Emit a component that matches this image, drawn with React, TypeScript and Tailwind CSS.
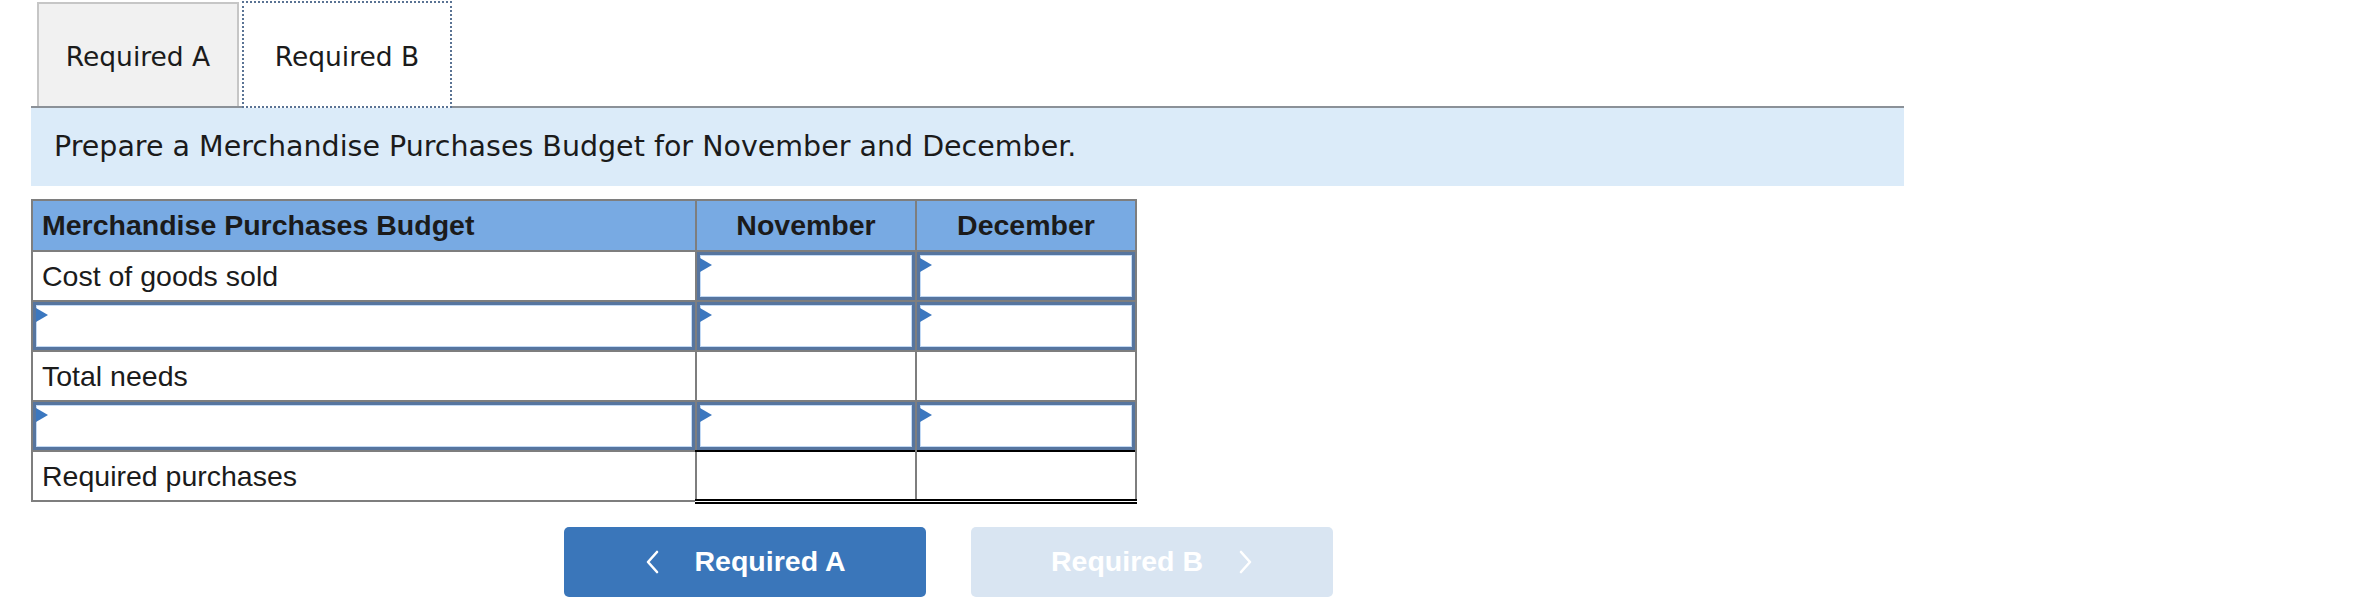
import React from "react";

// Small blue marker shown at the top-left of each dropdown/input cell
const Marker = () => (
  <svg
    className="absolute left-0 top-[3px]"
    width="12"
    height="14"
    viewBox="0 0 12 14"
  >
    <polygon points="0,0 12,7 0,14" fill="#3b77bf" />
  </svg>
);

const InputCell = () => (
  <div className="relative h-full w-full border-[3px] border-[#56759f] bg-white shadow-[inset_0_0_0_1px_#c3daf5]">
    <Marker />
  </div>
);

const ChevronLeft = () => (
  <svg width="14" height="24" viewBox="0 0 14 24" fill="none">
    <polyline
      points="12,2 3,12 12,22"
      stroke="white"
      strokeWidth="2.6"
      strokeLinecap="round"
      strokeLinejoin="round"
    />
  </svg>
);

const ChevronRight = () => (
  <svg width="14" height="24" viewBox="0 0 14 24" fill="none">
    <polyline
      points="2,2 11,12 2,22"
      stroke="white"
      strokeWidth="2.6"
      strokeLinecap="round"
      strokeLinejoin="round"
    />
  </svg>
);

export default function App() {
  const cell = "border-2 border-[#7e7e7e] p-0 h-[50px]";
  const label =
    "border-2 border-[#7e7e7e] h-[50px] px-[9px] text-left font-normal";

  return (
    <div className="w-[2365px] h-[615px] bg-white pl-[31px] pt-[1px] font-['Liberation_Sans',Arial,sans-serif] text-[#1b1b1b]">
      {/* Tabs */}
      <div className="relative z-10 flex items-start gap-[3px] pl-[6px] h-[105px] font-['DejaVu_Sans',Verdana,sans-serif] text-[26.5px]">
        <div className="mt-[1px] flex h-[104px] w-[202px] items-center justify-center border-2 border-b-0 border-[#c6c6c6] bg-[#f1f1f1] pt-[4px]">
          Required A
        </div>
        <div className="flex h-[107px] w-[210px] items-center justify-center border-2 border-dotted border-[#5a7394] bg-white pt-[4px]">
          Required B
        </div>
      </div>

      {/* Instruction band */}
      <div className="w-[1873px] border-t-2 border-[#8b9198] bg-[#dbebf9] h-[80px] flex items-center pl-[23px] font-['DejaVu_Sans',Verdana,sans-serif] text-[28.5px]">
        Prepare a Merchandise Purchases Budget for November and December.
      </div>

      {/* Budget table */}
      <table className="mt-[13px] border-collapse border-2 border-[#7e7e7e] text-[28.5px] table-fixed w-[1104px]">
        <colgroup>
          <col className="w-[664px]" />
          <col className="w-[220px]" />
          <col className="w-[220px]" />
        </colgroup>
        <thead>
          <tr className="bg-[#78aae3] h-[51px]">
            <th className="border-2 border-[#7e7e7e] px-[9px] text-left font-bold">
              Merchandise Purchases Budget
            </th>
            <th className="border-2 border-[#7e7e7e] text-center font-bold">
              November
            </th>
            <th className="border-2 border-[#7e7e7e] text-center font-bold">
              December
            </th>
          </tr>
        </thead>
        <tbody>
          <tr>
            <td className={label}>Cost of goods sold</td>
            <td className={cell}>
              <InputCell />
            </td>
            <td className={cell}>
              <InputCell />
            </td>
          </tr>
          <tr>
            <td className={cell}>
              <InputCell />
            </td>
            <td className={cell}>
              <InputCell />
            </td>
            <td className={cell}>
              <InputCell />
            </td>
          </tr>
          <tr>
            <td className={label}>Total needs</td>
            <td className="border-2 border-[#7e7e7e] border-t-black h-[50px]" />
            <td className="border-2 border-[#7e7e7e] border-t-black h-[50px]" />
          </tr>
          <tr>
            <td className={cell}>
              <InputCell />
            </td>
            <td className={cell}>
              <InputCell />
            </td>
            <td className={cell}>
              <InputCell />
            </td>
          </tr>
          <tr>
            <td className={label}>Required purchases</td>
            <td className="border-2 border-[#7e7e7e] border-t-black border-b-[5px] border-b-black border-double h-[50px]" />
            <td className="border-2 border-[#7e7e7e] border-t-black border-b-[5px] border-b-black border-double h-[50px]" />
          </tr>
        </tbody>
      </table>

      {/* Navigation buttons */}
      <div className="mt-[23px] ml-[533px] flex gap-[45px] text-[28.5px] font-bold text-white">
        <button className="flex h-[70px] w-[362px] items-center justify-center gap-[36px] rounded-[5px] bg-[#3a76ba]">
          <ChevronLeft />
          <span>Required A</span>
        </button>
        <button className="flex h-[70px] w-[362px] items-center justify-center gap-[36px] rounded-[5px] bg-[#d9e5f2]">
          <span>Required B</span>
          <ChevronRight />
        </button>
      </div>
    </div>
  );
}
